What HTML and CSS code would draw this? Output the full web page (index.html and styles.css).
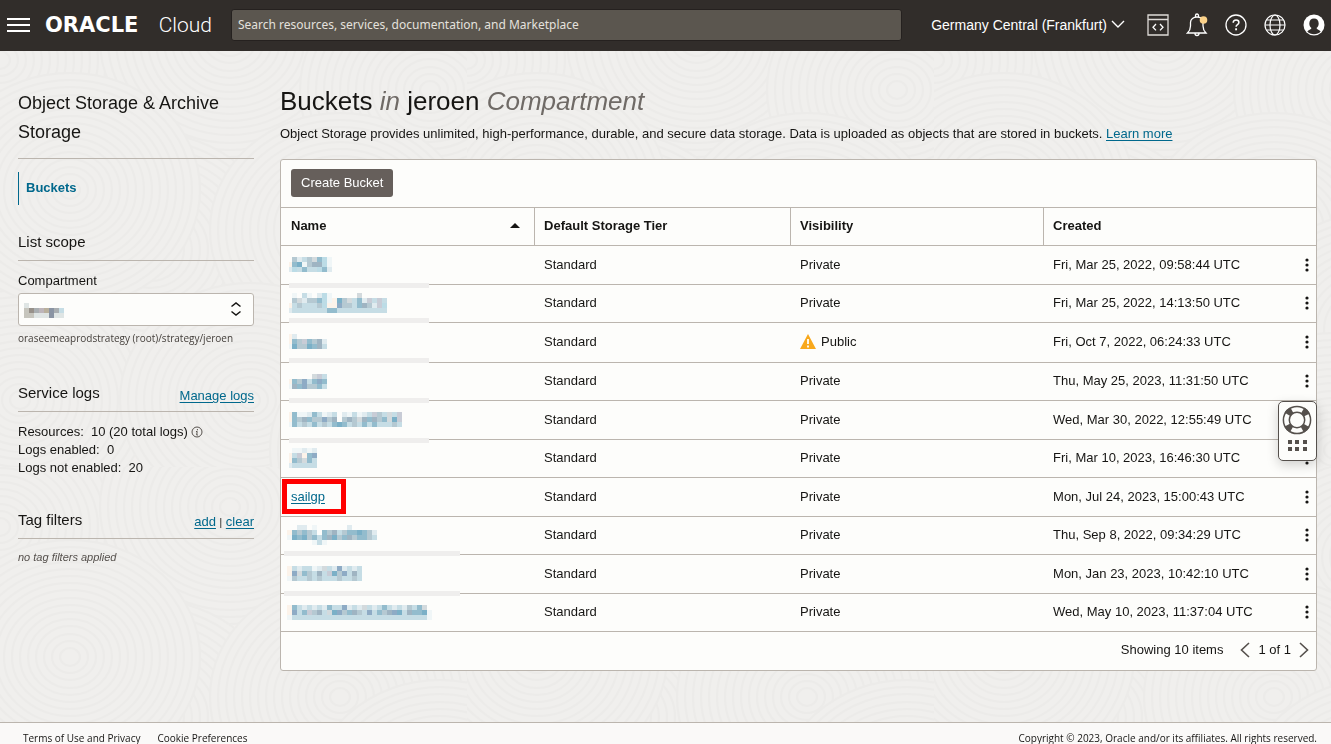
FILE: index.html
```html
<!DOCTYPE html>
<html lang="en">
<head>
<meta charset="utf-8">
<meta name="viewport" content="width=device-width, initial-scale=1">
<title>Buckets</title>
<link rel="stylesheet" href="styles.css">
</head>
<body>
<svg class="backdrop" aria-hidden="true"></svg>

<header class="topbar">
  <button class="icon-btn menu-btn" aria-label="Navigation menu">
    <svg width="24" height="14" viewBox="0 0 24 14"><path d="M0 1h23M0 7h23M0 13h23" stroke="#fff" stroke-width="2"/></svg>
  </button>
  <a class="brand" href="#"><span class="brand-name">ORACLE</span><span class="brand-product">Cloud</span></a>
  <input class="search" type="search" aria-label="Search" placeholder="Search resources, services, documentation, and Marketplace">
  <button class="region">Germany Central (Frankfurt)
    <svg width="14" height="9" viewBox="0 0 14 9"><path d="M1 1l6 6 6-6" fill="none" stroke="#fff" stroke-width="1.4"/></svg>
  </button>
  <nav class="tools" aria-label="Tools">
    <button class="icon-btn" aria-label="Developer tools">
      <svg width="22" height="22" viewBox="0 0 22 22" fill="none" stroke="#dedbd8" stroke-width="1.3"><path d="M1 1h20v20H1zM1 5.5h20"/><path d="M9 10l-3 3.2L9 16.400M13 10l3 3.200-3 3.200" stroke="#fff"/></svg>
    </button>
    <button class="icon-btn" aria-label="Announcements">
      <svg width="22" height="24" viewBox="0 0 22 24" fill="none" stroke="#fff" stroke-width="1.3"><path d="M9.500 4V2.500a1.500 1.500 0 0 1 3 0V4M1.500 20c2-2 3-3.500 3-7V9.500C4.500 6 7.500 4 11 4s6 2 6 5.500V13c0 3.500 1 5 3 7zM9 20.500a2 2 0 0 0 4 0"/><circle cx="17.500" cy="7" r="3.800" fill="#fbd28a" stroke="none"/></svg>
    </button>
    <button class="icon-btn" aria-label="Help">
      <svg width="22" height="22" viewBox="0 0 22 22" fill="none" stroke="#fff" stroke-width="1.3"><circle cx="11" cy="11" r="10"/><path d="M8.200 8.800c0-1.800 1.200-2.800 2.900-2.800s2.800 1 2.800 2.500c0 2.200-2.800 2.200-2.800 4.300" stroke-width="1.500"/><path d="M11.100 14.300v2" stroke-width="1.900"/></svg>
    </button>
    <button class="icon-btn" aria-label="Language">
      <svg width="22" height="22" viewBox="0 0 22 22" fill="none" stroke="#fff" stroke-width="1.200"><circle cx="11" cy="11" r="10"/><ellipse cx="11" cy="11" rx="5" ry="10"/><path d="M1 11h20M2.500 6h17M2.500 16h17"/></svg>
    </button>
    <button class="icon-btn" aria-label="Profile">
      <svg width="22" height="22" viewBox="0 0 22 22"><circle cx="11" cy="11" r="10.500" fill="#fff"/><path d="M11 4.500c2.900 0 4.700 2 4.700 4.900 0 2-.9 3.700-2.200 4.700.3 1.600 3.100 1.700 4.200 3.400-1.700 1.800-4 2.800-6.700 2.800s-5-1-6.700-2.800c1.100-1.700 3.900-1.800 4.200-3.400-1.300-1-2.200-2.700-2.200-4.700 0-2.900 1.800-4.900 4.700-4.900z" fill="#312d2a"/></svg>
    </button>
  </nav>
</header>

<div class="page">
  <aside class="sidebar">
    <h2 class="service-title">Object Storage &amp; Archive Storage</h2>
    <a class="nav-item" href="#" aria-current="page">Buckets</a>

    <section class="scope">
      <div class="section-head"><h3>List scope</h3></div>
      <label for="compartment">Compartment</label>
      <div class="picker">
        <select id="compartment"><option></option></select>
        <svg class="mosaic picker-value" data-mosaic="scope" aria-hidden="true"></svg>
        <svg class="picker-arrows" width="12" height="14" viewBox="0 0 12 14" aria-hidden="true"><path d="M1.500 4.500L6 1l4.500 3.500M1.500 9.500L6 13l4.500-3.500" fill="none" stroke="#161513" stroke-width="1.500"/></svg>
      </div>
      <p class="path">oraseemeaprodstrategy (root)/strategy/jeroen</p>
    </section>

    <section class="logs">
      <div class="section-head"><h3>Service logs</h3><a href="#">Manage logs</a></div>
      <p>Resources:&nbsp; 10 (20 total logs)
        <svg class="info" width="12" height="12" viewBox="0 0 12 12"><circle cx="6" cy="6" r="5" fill="none" stroke="#55504c"/><path d="M6.400 3v1.300M5 5.500h1.200L5.700 9h1.200" fill="none" stroke="#55504c"/></svg>
      </p>
      <p>Logs enabled:&nbsp; 0</p>
      <p>Logs not enabled:&nbsp; 20</p>
    </section>

    <section class="tags">
      <div class="section-head"><h3>Tag filters</h3><span class="links"><a href="#">add</a> <span class="bar">|</span> <a href="#">clear</a></span></div>
      <p class="empty">no tag filters applied</p>
    </section>
  </aside>

  <main class="content">
    <h1>Buckets <em>in</em> jeroen <em>Compartment</em></h1>
    <p class="intro">Object Storage provides unlimited, high-performance, durable, and secure data storage. Data is uploaded as objects that are stored in buckets. <a href="#">Learn more</a></p>

    <div class="card">
      <div class="toolbar"><button class="primary">Create Bucket</button></div>
      <div class="table-wrap">
        <table>
          <thead>
            <tr>
              <th scope="col" class="col-name" aria-sort="ascending"><span class="sortable">Name <svg width="10" height="5" viewBox="0 0 10 5"><path d="M0 5l5-5 5 5z" fill="#161513"/></svg></span></th>
              <th scope="col" class="col-tier">Default Storage Tier</th>
              <th scope="col" class="col-vis">Visibility</th>
              <th scope="col">Created</th>
            </tr>
          </thead>
          <tbody id="rows"></tbody>
        </table>
        <svg class="smudges" width="180" height="386" aria-hidden="true" fill="#efeeed">
          <path d="M8 37h140v5H8zM8 72h140v5H8zM8 112h140v5H8zM8 152h140v5H8zM8 192h140v5H8zM3 305h176v5H3zM3 345h176v5H3z"/>
        </svg>
      </div>
      <div class="pager">
        <span>Showing 10 items</span>
        <button aria-label="Previous page"><svg width="10" height="16" viewBox="0 0 10 16"><path d="M9 1L1.500 8 9 15" fill="none" stroke="#55504c" stroke-width="1.600"/></svg></button>
        <span>1 of 1</span>
        <button aria-label="Next page"><svg width="10" height="16" viewBox="0 0 10 16"><path d="M1 1l7.500 7L1 15" fill="none" stroke="#55504c" stroke-width="1.600"/></svg></button>
      </div>
    </div>
  </main>
</div>

<button class="support" aria-label="Support">
  <svg width="30" height="52" viewBox="0 0 30 52">
    <circle cx="15" cy="15" r="11" fill="none" stroke="#55504c" stroke-width="7" stroke-dasharray="6 11.279" stroke-dashoffset="-5.640"/>
    <circle cx="15" cy="15" r="13.600" fill="none" stroke="#55504c" stroke-width="1.500"/>
    <circle cx="15" cy="15" r="7.700" fill="none" stroke="#55504c" stroke-width="1.500"/>
    <path d="M6 35h4v4H6zM13 35h4v4h-4zM21 35h4v4h-4zM6 42h4v4H6zM13 42h4v4h-4zM21 42h4v4h-4z" fill="#55504c"/>
  </svg>
</button>

<footer class="footer">
  <a href="#">Terms of Use and Privacy</a>
  <a href="#">Cookie Preferences</a>
  <span class="copyright">Copyright © 2023, Oracle and/or its affiliates. All rights reserved.</span>
</footer>
<script src="script.js"></script>
</body>
</html>
```

FILE: styles.css
```css
* { box-sizing: border-box; }

body {
  margin: 0;
  min-height: 100vh;
  display: flex;
  flex-direction: column;
  background: #f1efed;
  color: #161513;
  font: 13px/18px "Liberation Sans", Arial, sans-serif;
}

h1, h2, h3, p { margin: 0; font-weight: 400; }
button { border: 0; padding: 0; background: none; font: inherit; color: inherit; cursor: pointer; }
svg { display: block; }
a { color: #00688c; text-underline-offset: 2px; }

.backdrop {
  position: fixed;
  inset: 0;
  width: 100%;
  height: 100%;
  z-index: -1;
}

/* Top bar */
.topbar {
  display: flex;
  align-items: center;
  height: 51px;
  padding: 0 6px 2px 7px;
  background: #312d2a;
  color: #fff;
}
.menu-btn { margin-right: 14px; }
.brand {
  display: flex;
  align-items: center;
  justify-content: space-between;
  width: 167px;
  margin-right: 19px;
  color: #fff;
  text-decoration: none;
}
.brand-name { font: 700 21px/24px "DejaVu Sans", sans-serif; }
.brand-product { font: 300 21px/24px Roboto, sans-serif; }
.search {
  flex: 1;
  min-width: 0;
  height: 32px;
  padding: 0 6px;
  border: 1px solid #25211f;
  border-radius: 3px;
  background: #5b564f;
  color: #fff;
  font: 12px/18px "Noto Sans", sans-serif;
}
.search::placeholder { color: #e4e1dd; opacity: 1; }
.region {
  display: flex;
  align-items: center;
  gap: 4px;
  margin: 0 22px 0 29px;
  font-size: 14px;
  white-space: nowrap;
}
.tools { display: flex; align-items: center; gap: 17px; }

/* Page */
.page {
  flex: 1;
  display: flex;
  align-items: flex-start;
  gap: 26px;
  padding: 37px 14px 24px 18px;
}
.sidebar { flex: none; width: 236px; }
.service-title {
  padding: 1px 0 11px;
  border-bottom: 1px solid #bbb5ae;
  font-size: 18px;
  line-height: 29px;
}
.nav-item {
  display: block;
  margin-top: 13px;
  padding: 7px 7px 8px;
  border-left: 1px solid #00688c;
  font-weight: 700;
  text-decoration: none;
}
.section-head {
  display: flex;
  align-items: flex-end;
  justify-content: space-between;
  padding-bottom: 6px;
  border-bottom: 1px solid #bbb5ae;
}
.section-head h3 { font-size: 15px; line-height: 24px; }
.scope { margin-top: 25px; }
.scope label { display: block; margin: 11px 0 3px; }
.picker { position: relative; }
.picker select {
  display: block;
  width: 100%;
  height: 33px;
  border: 1px solid #bbb5ae;
  border-radius: 3px;
  background: #fdfdfb;
  appearance: none;
}
.picker-value { position: absolute; left: 6px; top: 10px; }
.picker-arrows { position: absolute; right: 12px; top: 9px; }
.path, .footer { font: 10px/12px "Open Sans", sans-serif; }
.path { margin-top: 6px; color: #45403c; }
.logs { margin-top: 37px; }
.tags { margin-top: 31px; }
.logs .section-head { margin-bottom: 11px; }
.info { display: inline-block; vertical-align: -2px; }
.links { font-size: 13px; }
.bar { font-size: 10px; }
.empty { margin-top: 9px; color: #55504c; font-size: 11px; font-style: italic; }

.content { flex: 1; min-width: 0; }
h1 { margin-top: -2px; font-size: 26px; line-height: 30px; }
h1 em { color: #6f6a66; }
.intro { margin: 9px 0 16px; }

/* Bucket table */
.card { border: 1px solid #bbb5ae; border-radius: 3px; background: #fdfdfb; }
.toolbar { padding: 9px 10px 10px; }
.primary {
  height: 28px;
  padding: 0 10px;
  border-radius: 3px;
  background: #665f5b;
  color: #fff;
}
.table-wrap { position: relative; }
table { width: 100%; table-layout: fixed; border-collapse: separate; border-spacing: 0; }
th {
  height: 39px;
  padding: 0 9px 2px;
  border-top: 1px solid #bbb5ae;
  border-bottom: 1px solid #bbb5ae;
  text-align: left;
  font-weight: 700;
}
th + th { border-left: 1px solid #bbb5ae; }
th:first-child { padding-left: 10px; }
.col-name, .col-vis { width: 24.45%; }
.col-tier { width: 24.73%; }
.sortable { display: flex; align-items: center; justify-content: space-between; padding-right: 5px; }
td { height: 38px; padding: 0 10px 1px; border-bottom: 1px solid #bbb5ae; }
td:first-child { position: relative; padding-left: 8px; }
td:last-child { padding-right: 7px; }
tr:nth-child(odd) td { height: 39px; }
tr.flagged td { height: 40px; padding-bottom: 2px; }
.mosaic.wide-edge { margin-left: -2px; }
.picker .picker-value { margin-left: 0; }
.bucket { margin-left: 2px; }
.highlight {
  position: absolute;
  inset: 1px auto auto 1px;
  width: 64px;
  height: 35px;
  border: 5px solid #f00;
  pointer-events: none;
}
.status { display: flex; align-items: center; gap: 5px; }
.created { display: flex; align-items: center; justify-content: space-between; }
.smudges { position: absolute; left: 0; top: 39px; pointer-events: none; }
.pager {
  display: flex;
  align-items: center;
  justify-content: flex-end;
  gap: 8px;
  height: 38px;
  padding: 0 7px 2px;
}
.pager span:first-child { margin-right: 9px; }

.support {
  position: fixed;
  right: 14px;
  top: 401px;
  width: 39px;
  height: 60px;
  padding: 3px;
  border: 1px solid #55504c;
  border-radius: 5px;
  background: #fdfdfb;
  box-shadow: 0 4px 12px rgba(0, 0, 0, 0.18);
}

.footer {
  display: flex;
  gap: 17px;
  padding: 9px 14px 0 23px;
  border-top: 1px solid #bbb5ae;
  background: #faf9f8;
}
.footer a { color: #161513; text-decoration: none; }
.copyright { margin-left: auto; }
```

FILE: script.js
```js
const palette = {
  a: '#b5c9d2', b: '#93bccd', c: '#c6dde5', d: '#e0ebef', e: '#7bb0c7',
  f: '#9fb4c2', g: '#d3dadd', h: '#fcf3ea', i: '#c8ccd6', j: '#f0f6f7',
  k: '#8eabc5', l: '#bcdce6', m: '#c6c5bd', n: '#97918a', o: '#a9aeb1',
  p: '#bdb5ba', q: '#b9b09d', r: '#8a94a3', s: '#dfe5e4'
};

const mosaics = {
  scope: ['s.......', 'mnopqroc', 'mmsssrss'],
  m1: ['.adcagblj', 'hbejafflj', 'dlcbcclbd'],
  m2: ['.j.cj.dlj.....g.....', '.agdaabljheagcbdicic', 'hcacccalhhkaacbfadil', 'dcccccccbbcccccccccc'],
  m3: ['hd......', 'hbaibafd', 'jeaaebfc'],
  m4: ['.....gic', 'hbakcbkb', 'jfbkaabc'],
  m5: ['hbjjdbcjdc.djcjdciacgci', 'hbafbaakaf.afagfbfabgei', 'jbcacbcacbebcacbcbcccac'],
  m6: ['.jjdjd', 'hcihbk', 'hbagbc', 'dccccc'],
  m8: ['..dd.j......d.....', 'hbabac.bafcabbebad', 'jebeabcbfeabfabbac', '.....jcj..........'],
  m9: ['hcdccjdgcdkdcdc.', 'hkgbacfcieakcfc.', 'jaccacacccaccac.'],
  m10: ['hbcdcdcdbcckdcdgcdcbcdcdacbg.', 'hkcbiafcgekabfackcbafkecfbbej', 'jcccccccccccccccccccccccccccj']
};

const buckets = [
  ['m1', 'Private', 'Fri, Mar 25, 2022, 09:58:44 UTC'],
  ['m2', 'Private', 'Fri, Mar 25, 2022, 14:13:50 UTC'],
  ['m3', 'Public', 'Fri, Oct 7, 2022, 06:24:33 UTC'],
  ['m4', 'Private', 'Thu, May 25, 2023, 11:31:50 UTC'],
  ['m5', 'Private', 'Wed, Mar 30, 2022, 12:55:49 UTC'],
  ['m6', 'Private', 'Fri, Mar 10, 2023, 16:46:30 UTC'],
  [null, 'Private', 'Mon, Jul 24, 2023, 15:00:43 UTC'],
  ['m8', 'Private', 'Thu, Sep 8, 2022, 09:34:29 UTC'],
  ['m9', 'Private', 'Mon, Jan 23, 2023, 10:42:10 UTC'],
  ['m10', 'Private', 'Wed, May 10, 2023, 11:37:04 UTC']
];

const wideEdge = ['m8', 'm9', 'm10', 'scope'];
const warning = '<svg width="16" height="15" viewBox="0 0 16 15"><path d="M8 0l8 15H0z" fill="#f8a81b"/><path d="M8 5v5M8 11.500v2" stroke="#fff" stroke-width="1.800"/></svg>';
const dots = '<button aria-label="Actions"><svg width="4" height="14" viewBox="0 0 4 14"><g fill="#161513"><circle cx="2" cy="2" r="1.600"/><circle cx="2" cy="7" r="1.600"/><circle cx="2" cy="12" r="1.600"/></g></svg></button>';

document.getElementById('rows').innerHTML = buckets.map(([id, visibility, created]) => {
  const name = id
    ? `<svg class="mosaic${wideEdge.includes(id) ? ' wide-edge' : ''}" data-mosaic="${id}" aria-hidden="true"></svg>`
    : '<a class="bucket" href="#">sailgp</a><span class="highlight"></span>';
  const isPublic = visibility === 'Public';
  const status = isPublic ? `<span class="status">${warning}${visibility}</span>` : visibility;
  return `<tr${isPublic ? ' class="flagged"' : ''}><td>${name}</td><td>Standard</td><td>${status}</td>` +
    `<td><span class="created">${created}${dots}</span></td></tr>`;
}).join('');

/* Pixelated names: 5px cells, with the first column narrower unless listed in wideEdge. */
document.querySelectorAll('[data-mosaic]').forEach((svg) => {
  const id = svg.dataset.mosaic;
  const grid = mosaics[id];
  const cut = wideEdge.includes(id) ? 0 : 2;
  const width = grid[0].length * 5 - cut;
  const height = grid.length * 5;
  svg.setAttribute('width', width);
  svg.setAttribute('height', height);
  svg.setAttribute('viewBox', `${cut} 0 ${width} ${height}`);
  svg.setAttribute('shape-rendering', 'crispEdges');
  svg.innerHTML = grid.map((row, y) => [...row].map((c, x) =>
    palette[c] ? `<rect x="${x * 5}" y="${y * 5}" width="5" height="5" fill="${palette[c]}"/>` : ''
  ).join('')).join('');
});

/* Faint concentric swirls behind the page. */
const centers = [[0, 60], [230, 40], [430, 90], [150, 250], [340, 230], [20, 400], [250, 400], [440, 330], [70, 190], [400, 450]];
let rings = '';
centers.forEach(([cx, cy]) => {
  for (let r = 130; r > 3; r -= 8) {
    rings += `<ellipse cx="${cx}" cy="${cy}" rx="${r}" ry="${Math.round(r * 0.9)}"/>`;
  }
});
document.querySelector('.backdrop').innerHTML =
  `<defs><pattern id="swirl" width="467" height="467" patternUnits="userSpaceOnUse"><g fill="#f0efed" stroke="#ecebe9" stroke-width="2">${rings}</g></pattern></defs>` +
  '<rect width="100%" height="100%" fill="url(#swirl)"/>';
```
